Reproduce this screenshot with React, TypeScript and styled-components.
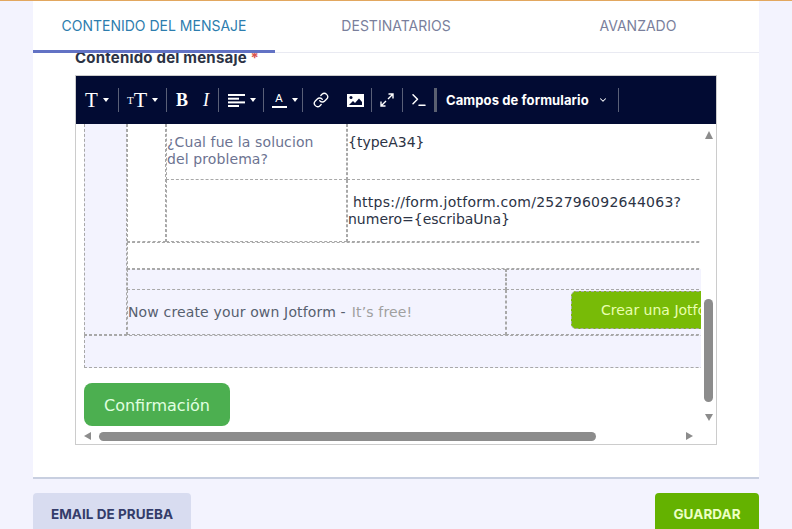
import React from 'react';
import styled, { createGlobalStyle } from 'styled-components';
import { Link, Terminal, ChevronDown } from 'lucide-react';

const GlobalStyle = createGlobalStyle`
  html, body {
    margin: 0;
    padding: 0;
    height: 100%;
    overflow: hidden;
    background: #f3f3fe;
    font-family: Inter, "Liberation Sans", sans-serif;
  }
`;

const Page = styled.div`
  width: 792px;
  height: 529px;
  box-sizing: border-box;
  border-top: 1px solid #e2a75f;
  padding: 0 33px;
  overflow: hidden;
`;

const Card = styled.div`
  height: 478px;
  box-sizing: border-box;
  background: #fff;
  border-bottom: 2px solid #c8cfe0;
  display: flex;
  flex-direction: column;
`;

const Tabs = styled.div`
  height: 52px;
  flex: none;
  box-sizing: border-box;
  display: grid;
  grid-template-columns: 242px 242px 242px;
  border-bottom: 1px solid #e9eaf2;
`;

const Tab = styled.div<{ $active?: boolean }>`
  height: 52px;
  box-sizing: border-box;
  display: flex;
  align-items: center;
  justify-content: center;
  padding-bottom: 1px;
  font-size: 14px;
  color: ${(p) => (p.$active ? '#2d7dae' : '#7a7f9c')};
  border-bottom: 3px solid ${(p) => (p.$active ? '#6272c4' : 'transparent')};
`;

const Body = styled.div`
  flex: 1;
  min-height: 0;
  overflow: hidden;
  padding: 0 42px;
`;

const Label = styled.div`
  margin-top: -6px;
  height: 28px;
  font-size: 15px;
  line-height: 21px;
  font-weight: 700;
  color: #2c3345;
  letter-spacing: 0.2px;
  span {
    color: #d9534f;
  }
`;

const Editor = styled.div`
  width: 642px;
  height: 370px;
  box-sizing: border-box;
  border: 1px solid #ccc;
  display: flex;
  flex-direction: column;
`;

const Toolbar = styled.div`
  height: 48px;
  flex: none;
  background: #020b33;
  display: flex;
  align-items: center;
  color: #fff;
`;

const ToolGroup = styled.div<{ $w: number; $open?: boolean }>`
  width: ${(p) => p.$w}px;
  height: 24px;
  box-sizing: border-box;
  display: flex;
  align-items: center;
  border-right: ${(p) => (p.$open ? 'none' : '1px solid #5a6078')};
`;

const ThickBar = styled.div`
  width: 3px;
  height: 24px;
  margin-left: -1px;
  background: #5a5f70;
`;

const Tool = styled.div<{ $w: number; $shift?: number }>`
  width: ${(p) => p.$w}px;
  flex: none;
  box-sizing: border-box;
  padding-left: ${(p) => p.$shift ?? 0}px;
  display: flex;
  align-items: center;
  justify-content: center;
  font-family: "Liberation Serif", serif;
`;

const Glyph = styled.span<{ $size: number; $bold?: boolean; $italic?: boolean }>`
  font-size: ${(p) => p.$size}px;
  line-height: 24px;
  font-weight: ${(p) => (p.$bold ? 700 : 400)};
  font-style: ${(p) => (p.$italic ? 'italic' : 'normal')};
`;

const Caret = styled.span`
  width: 0;
  height: 0;
  margin-left: 5px;
  border-left: 3.5px solid transparent;
  border-right: 3.5px solid transparent;
  border-top: 4px solid #fff;
`;

const ColorA = styled.span`
  font-family: "Liberation Sans", sans-serif;
  font-size: 11px;
  line-height: 11px;
  height: 15px;
  width: 15px;
  box-sizing: border-box;
  text-align: center;
  border-bottom: 2px solid #fff;
`;

const FieldsMenu = styled.div`
  flex: 1;
  display: flex;
  align-items: center;
  padding-left: 9px;
  font-family: Inter, sans-serif;
  font-size: 13px;
  font-weight: 700;
  letter-spacing: 0.1px;
  gap: 9px;
`;

const EditorBody = styled.div`
  flex: 1;
  min-height: 0;
  display: grid;
  grid-template-columns: 625px 15px;
  grid-template-rows: 306px 14px;
`;

const Viewport = styled.div`
  overflow: hidden;
  padding-left: 8px;
  font-family: "DejaVu Sans", sans-serif;
  font-size: 14px;
  line-height: 17px;
`;

const Outer = styled.div`
  width: 760px;
`;

const OuterRow = styled.div`
  display: grid;
  grid-template-columns: 43px 1fr;
  height: 211px;
`;

const Cell = styled.div<{ $tint?: boolean; $ruled?: boolean }>`
  box-sizing: border-box;
  border: 1px dashed #a8a8a8;
  border-top-width: ${(p) => (p.$ruled ? 1 : 0)}px;
  background: ${(p) => (p.$tint ? '#f3f3fe' : '#fff')};
`;

const Form = styled.div`
  display: grid;
  grid-template-columns: 39px 181px 1fr;
  grid-template-rows: 56px 62px;
  height: 118px;
`;

const SideCell = styled(Cell)`
  grid-row: 1 / 3;
`;

const QuestionCell = styled(Cell)`
  padding: 10px 0 0 0;
  letter-spacing: 0.1px;
  color: #6c7391;
`;

const ValueCell = styled(Cell)`
  padding: 10px 0 0 0;
  color: #2c3345;
  white-space: nowrap;
`;

const LinkCell = styled(ValueCell)`
  padding-top: 14px;
`;

const LinkLine = styled.span`
  padding-left: 5px;
  letter-spacing: 0.25px;
`;

const Blank = styled(Cell)`
  height: 27px;
`;

const FooterRow = styled.div<{ $h: number }>`
  display: grid;
  grid-template-columns: 379px 1fr;
  height: ${(p) => p.$h}px;
`;

const PromoCell = styled(Cell)`
  display: flex;
  align-items: center;
  padding: 0;
  letter-spacing: 0.15px;
  color: #57606f;
  white-space: nowrap;
  span {
    color: #a0a0a0;
    margin-left: 6px;
  }
`;

const CtaCell = styled(Cell)`
  padding: 1px 0 0 64px;
`;

const CtaButton = styled.div`
  width: 160px;
  height: 38px;
  box-sizing: border-box;
  border: 1px dashed #a8a8a8;
  border-radius: 5px;
  background: #78bb07;
  color: #e9ffb0;
  padding: 10px 0 0 29px;
  white-space: nowrap;
`;

const BottomRow = styled(Cell)`
  height: 33px;
`;

const ConfirmButton = styled.div`
  width: 146px;
  height: 43px;
  box-sizing: border-box;
  padding-top: 1px;
  margin-top: 15px;
  border-radius: 8px;
  background: #4caf50;
  color: #e0ffe0;
  font-size: 16px;
  display: flex;
  align-items: center;
  justify-content: center;
`;

const VRail = styled.div`
  grid-column: 2;
  grid-row: 1 / 3;
  display: flex;
  flex-direction: column;
  align-items: center;
  padding: 7px 3px 0 3px;
  width: 9px;
`;

const ArrowUp = styled.div`
  flex: none;
  border-left: 4.5px solid transparent;
  border-right: 4.5px solid transparent;
  border-bottom: 8px solid #8c8c8c;
`;

const ArrowDown = styled.div`
  flex: none;
  margin-top: 12px;
  border-left: 4.5px solid transparent;
  border-right: 4.5px solid transparent;
  border-top: 7px solid #8c8c8c;
`;

const VThumb = styled.div`
  flex: none;
  width: 9px;
  height: 103px;
  margin-top: 160px;
  border-radius: 5px;
  background: #8c8c8c;
`;

const HRail = styled.div`
  display: flex;
  align-items: center;
  padding: 0 0 2px 8px;
`;

const ArrowLeft = styled.div`
  flex: none;
  border-top: 4.5px solid transparent;
  border-bottom: 4.5px solid transparent;
  border-right: 7px solid #8c8c8c;
`;

const ArrowRight = styled.div`
  flex: none;
  margin-left: 90px;
  border-top: 4.5px solid transparent;
  border-bottom: 4.5px solid transparent;
  border-left: 7px solid #8c8c8c;
`;

const HThumb = styled.div`
  flex: none;
  width: 497px;
  height: 9px;
  margin-left: 8px;
  border-radius: 5px;
  background: #8c8c8c;
`;

const Actions = styled.div`
  display: flex;
  justify-content: space-between;
  margin-top: 14px;
`;

const ActionButton = styled.div<{ $w: number; $primary?: boolean }>`
  width: ${(p) => p.$w}px;
  height: 50px;
  box-sizing: border-box;
  padding-top: 13px;
  border-radius: 4px;
  text-align: center;
  font-size: 13.5px;
  font-weight: 700;
  letter-spacing: 0.05px;
  line-height: 16px;
  background: ${(p) => (p.$primary ? '#64b200' : '#d8dcf0')};
  color: ${(p) => (p.$primary ? '#ecffc4' : '#343c6a')};
`;

const AlignIcon = () => (
  <svg width="17" height="13" viewBox="0 0 17 13" fill="#fff">
    <rect x="0" y="0" width="17" height="2" />
    <rect x="0" y="3.7" width="11" height="2" />
    <rect x="0" y="7.4" width="17" height="2" />
    <rect x="0" y="11" width="11" height="2" />
  </svg>
);

const ImageIcon = () => (
  <svg width="17" height="13" viewBox="0 0 17 13">
    <rect width="17" height="13" fill="#fff" />
    <circle cx="4" cy="3.6" r="1.5" fill="#020b33" />
    <path d="M2 11 L6 7 L8 9 L12 4.5 L15 8 V11 Z" fill="#020b33" />
  </svg>
);

const ExpandIcon = () => (
  <svg width="14" height="14" viewBox="0 0 14 14" fill="none" stroke="#fff" strokeWidth="1.4">
    <path d="M8 6 L13 1 M8.5 1 H13 V5.5" />
    <path d="M6 8 L1 13 M1 8.5 V13 H5.5" />
  </svg>
);

const App = () => (
  <Page>
    <GlobalStyle />
    <Card>
      <Tabs>
        <Tab $active>CONTENIDO DEL MENSAJE</Tab>
        <Tab>DESTINATARIOS</Tab>
        <Tab>AVANZADO</Tab>
      </Tabs>
      <Body>
        <Label>
          Contenido del mensaje <span>*</span>
        </Label>
        <Editor>
          <Toolbar>
            <ToolGroup $w={43}>
              <Tool $w={42}>
                <Glyph $size={21}>T</Glyph>
                <Caret />
              </Tool>
            </ToolGroup>
            <ToolGroup $w={48}>
              <Tool $w={47}>
                <Glyph $size={11}>T</Glyph>
                <Glyph $size={22}>T</Glyph>
                <Caret />
              </Tool>
            </ToolGroup>
            <ToolGroup $w={52}>
              <Tool $w={24} $shift={6}>
                <Glyph $size={18} $bold>B</Glyph>
              </Tool>
              <Tool $w={24} $shift={6}>
                <Glyph $size={18} $italic>I</Glyph>
              </Tool>
            </ToolGroup>
            <ToolGroup $w={45}>
              <Tool $w={44} $shift={1}>
                <AlignIcon />
                <Caret />
              </Tool>
            </ToolGroup>
            <ToolGroup $w={39}>
              <Tool $w={38} $shift={3}>
                <ColorA>A</ColorA>
                <Caret />
              </Tool>
            </ToolGroup>
            <ToolGroup $w={69}>
              <Tool $w={35}>
                <Link size={16} />
              </Tool>
              <Tool $w={33} $shift={2}>
                <ImageIcon />
              </Tool>
            </ToolGroup>
            <ToolGroup $w={31}>
              <Tool $w={30}>
                <ExpandIcon />
              </Tool>
            </ToolGroup>
            <ToolGroup $w={32} $open>
              <Tool $w={31}>
                <Terminal size={18} />
              </Tool>
            </ToolGroup>
            <ThickBar />
            <ToolGroup $w={182}>
              <FieldsMenu>
                Campos de formulario
                <ChevronDown size={10} strokeWidth={2.5} />
              </FieldsMenu>
            </ToolGroup>
          </Toolbar>
          <EditorBody>
            <Viewport>
              <Outer>
                <OuterRow>
                  <Cell $tint />
                  <div>
                    <Form>
                      <SideCell />
                      <QuestionCell>
                        ¿Cual fue la solucion
                        <br />
                        del problema?
                      </QuestionCell>
                      <ValueCell>{'{typeA34}'}</ValueCell>
                      <Cell />
                      <LinkCell>
                        <LinkLine>https://form.jotform.com/252796092644063?</LinkLine>
                        <br />
                        {'numero={escribaUna}'}
                      </LinkCell>
                    </Form>
                    <Blank $ruled />
                    <FooterRow $h={21}>
                      <Cell $tint $ruled />
                      <Cell $tint $ruled />
                    </FooterRow>
                    <FooterRow $h={45}>
                      <PromoCell $tint>
                        Now create your own Jotform - <span>It’s free!</span>
                      </PromoCell>
                      <CtaCell $tint>
                        <CtaButton>Crear una Jotform</CtaButton>
                      </CtaCell>
                    </FooterRow>
                  </div>
                </OuterRow>
                <BottomRow $tint $ruled />
              </Outer>
              <ConfirmButton>Confirmación</ConfirmButton>
            </Viewport>
            <VRail>
              <ArrowUp />
              <VThumb />
              <ArrowDown />
            </VRail>
            <HRail>
              <ArrowLeft />
              <HThumb />
              <ArrowRight />
            </HRail>
          </EditorBody>
        </Editor>
      </Body>
    </Card>
    <Actions>
      <ActionButton $w={158}>EMAIL DE PRUEBA</ActionButton>
      <ActionButton $w={104} $primary>GUARDAR</ActionButton>
    </Actions>
  </Page>
);

export default App;
